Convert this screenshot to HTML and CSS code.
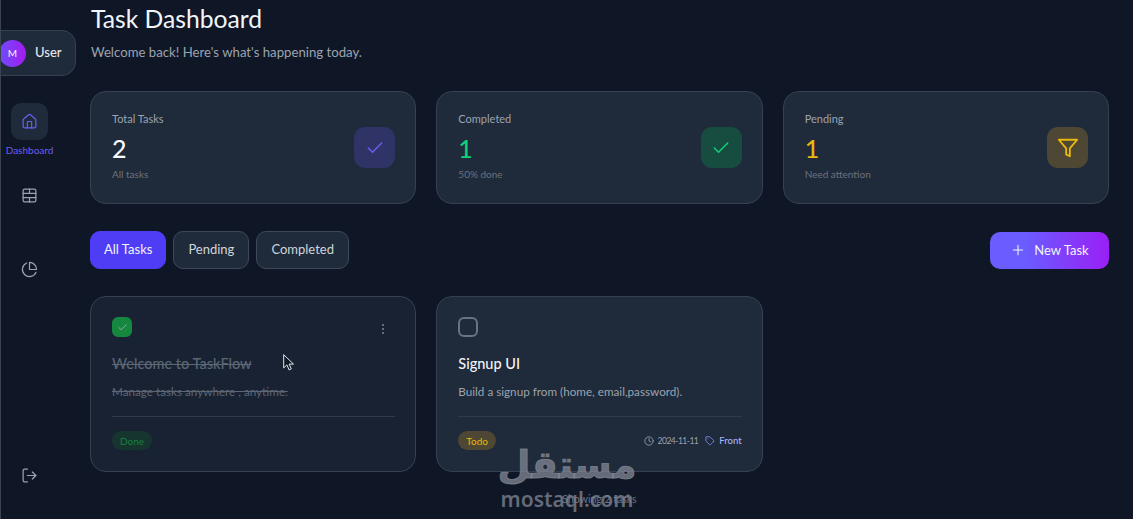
FILE: index.html
```html
<!doctype html>
<html lang="en">

<head>
  <meta charset="utf-8">
  <title>Task Dashboard</title>
  <link rel="stylesheet" href="styles.css">
</head>

<body>
  <aside class="sidebar">
    <div class="user-chip">
      <span class="avatar">M</span>
      <span class="user-name">User</span>
    </div>

    <nav class="nav">
      <a class="nav-item active">
        <span class="nav-tile">
          <svg class="icon" viewBox="0 0 24 24"><path d="M15 21v-8a1 1 0 0 0-1-1h-4a1 1 0 0 0-1 1v8"/><path d="M3 10a2 2 0 0 1 .709-1.528l7-5.999a2 2 0 0 1 2.582 0l7 5.999A2 2 0 0 1 21 10v9a2 2 0 0 1-2 2H5a2 2 0 0 1-2-2z"/></svg>
        </span>
        <span class="nav-label">Dashboard</span>
      </a>
      <a class="nav-item">
        <span class="nav-tile">
          <svg class="icon" viewBox="0 0 24 24"><rect x="3" y="3" width="18" height="18" rx="2"/><path d="M3 9h18M3 15h18M12 3v6M12 15v6"/></svg>
        </span>
      </a>
      <a class="nav-item">
        <span class="nav-tile">
          <svg class="icon" viewBox="0 0 24 24"><path d="M21.21 15.89A10 10 0 1 1 8 2.83"/><path d="M22 12A10 10 0 0 0 12 2v10z"/></svg>
        </span>
      </a>
    </nav>

    <a class="nav-tile logout">
      <svg class="icon" viewBox="0 0 24 24"><path d="M9 21H5a2 2 0 0 1-2-2V5a2 2 0 0 1 2-2h4"/><path d="M16 17l5-5-5-5"/><path d="M21 12H9"/></svg>
    </a>
  </aside>

  <main class="main">
    <h1 class="page-title">Task Dashboard</h1>
    <p class="page-sub">Welcome back! Here's what's happening today.</p>

    <section class="stats">
      <div class="stat-card">
        <div>
          <div class="stat-label">Total Tasks</div>
          <div class="stat-value">2</div>
          <div class="stat-note">All tasks</div>
        </div>
        <span class="stat-icon indigo">
          <svg class="icon" viewBox="0 0 24 24"><path d="M20 6L9 17l-5-5"/></svg>
        </span>
      </div>
      <div class="stat-card">
        <div>
          <div class="stat-label">Completed</div>
          <div class="stat-value green">1</div>
          <div class="stat-note">50% done</div>
        </div>
        <span class="stat-icon emerald">
          <svg class="icon" viewBox="0 0 24 24"><path d="M20 6L9 17l-5-5"/></svg>
        </span>
      </div>
      <div class="stat-card">
        <div>
          <div class="stat-label">Pending</div>
          <div class="stat-value yellow">1</div>
          <div class="stat-note">Need attention</div>
        </div>
        <span class="stat-icon amber">
          <svg class="icon" viewBox="0 0 24 24"><path d="M22 3H2l8 9.46V19l4 2v-8.54z"/></svg>
        </span>
      </div>
    </section>

    <section class="toolbar">
      <div class="filters">
        <button class="filter active">All Tasks</button>
        <button class="filter">Pending</button>
        <button class="filter">Completed</button>
      </div>
      <button class="new-task">
        <svg class="icon" viewBox="0 0 24 24"><path d="M12 5v14M5 12h14"/></svg>
        New Task
      </button>
    </section>

    <section class="tasks">
      <article class="task-card done">
        <div class="task-top">
          <span class="checkbox checked">
            <svg class="icon" viewBox="0 0 24 24"><path d="M20 6L9 17l-5-5"/></svg>
          </span>
          <span class="kebab"><i></i><i></i><i></i></span>
        </div>
        <h2 class="task-title">Welcome to TaskFlow</h2>
        <p class="task-desc">Manage tasks anywhere , anytime.</p>
        <div class="task-foot">
          <span class="badge badge-done">Done</span>
        </div>
      </article>

      <article class="task-card">
        <div class="task-top">
          <span class="checkbox"></span>
        </div>
        <h2 class="task-title">Signup UI</h2>
        <p class="task-desc">Build a signup from (home, email,password).</p>
        <div class="task-foot">
          <span class="badge badge-todo">Todo</span>
          <div class="task-meta">
            <svg class="icon" viewBox="0 0 24 24"><circle cx="12" cy="12" r="10"/><path d="M12 6v6l4 2"/></svg>
            <span class="task-date">2024-11-11</span>
            <svg class="icon tag-icon" viewBox="0 0 24 24"><path d="M20.59 13.41l-7.17 7.17a2 2 0 0 1-2.83 0L2 12V2h10l8.59 8.59a2 2 0 0 1 0 2.82z"/><path d="M7 7h.01"/></svg>
            <span class="tag-name">Front</span>
          </div>
        </div>
      </article>
    </section>

    <p class="task-count">Showing 2 tasks</p>
  </main>

  <!-- mouse pointer caught in the capture -->
  <svg class="cursor" viewBox="0 0 12 17"><path d="M.7.7v13.2l3.2-3 2.2 5 2.2-1-2.2-4.8h4.4z"/></svg>

  <!-- site watermark -->
  <div class="watermark">
    <span class="wm-ar" lang="ar" dir="rtl">مستقل</span>
    <span class="wm-en">mostaql.com</span>
  </div>
</body>

</html>
```

FILE: styles.css
```css
* {
  box-sizing: border-box;
}

html,
body {
  height: 100%;
}

body {
  margin: 0;
  display: flex;
  overflow: hidden;
  position: relative;
  background-color: #0f1727;
  border-left: 1px solid #3b4250;
  color: #f1f5f9;
  font-family: Lato, 'Noto Sans', sans-serif;
}

.icon {
  display: block;
  fill: none;
  stroke: currentColor;
  stroke-width: 2;
  stroke-linecap: round;
  stroke-linejoin: round;
}

/* sidebar */
.sidebar {
  flex: 0 0 75px;
  display: flex;
  flex-direction: column;
  align-items: flex-start;
  overflow: hidden;
  padding: 30px 0 25px;
}

.user-chip {
  display: flex;
  align-items: center;
  gap: 9px;
  width: 89px;
  height: 46px;
  margin-left: -14px;
  padding-left: 11px;
  flex: none;
  background-color: #1f2a3a;
  border: 1px solid #354152;
  border-radius: 14px;
}

.avatar {
  flex: none;
  width: 27px;
  height: 27px;
  border-radius: 50%;
  display: flex;
  align-items: center;
  justify-content: center;
  background: linear-gradient(90deg, #6d4dfa, #a21cf0);
  font-size: 10px;
}

.user-name {
  padding-bottom: 2px;
  font-size: 13px;
  font-weight: 500;
  color: #e5e7eb;
}

.nav {
  width: 57px;
  margin-top: 27px;
  display: flex;
  flex-direction: column;
  gap: 20px;
}

.nav-item {
  height: 54px;
  display: flex;
  flex-direction: column;
  align-items: center;
}

.nav-tile {
  width: 37px;
  height: 37px;
  flex: none;
  display: flex;
  align-items: center;
  justify-content: center;
  border-radius: 10px;
  color: #9ca3af;
}

.nav-tile .icon {
  width: 17px;
  height: 17px;
  stroke-width: 1.7;
}

.nav-item.active .nav-tile {
  background-color: #1f2a3a;
  color: #6d5cf0;
}

.nav-label {
  margin-top: 4px;
  font-size: 10px;
  line-height: 12px;
  color: #6d5cf0;
}

.logout {
  margin-top: auto;
  margin-left: 10px;
}

/* main column */
.main {
  flex: 1;
  min-width: 0;
  padding: 5px 24px 0 14px;
}

.page-title {
  margin: 0 0 0 1px;
  font-size: 24.7px;
  line-height: 28px;
  font-weight: 400;
  color: #f1f5f9;
}

.page-sub {
  margin: 9px 0 0 1px;
  font-size: 13.2px;
  line-height: 20px;
  color: #9ca3af;
}

.stats {
  margin-top: 29px;
  display: grid;
  grid-template-columns: repeat(3, 1fr);
  gap: 20px;
}

.stat-card {
  height: 113px;
  padding: 19px 20px 0 21px;
  display: flex;
  justify-content: space-between;
  background-color: #1f2a3a;
  border: 1px solid #354152;
  border-radius: 16px;
}

.stat-label {
  font-size: 11px;
  line-height: 16px;
  color: #9ca3af;
}

.stat-value {
  margin-top: 5px;
  font-size: 25px;
  line-height: 32px;
  font-weight: 500;
  color: #f8fafc;
}

.stat-value.green {
  color: #10d078;
}

.stat-value.yellow {
  color: #eab90c;
}

.stat-note {
  margin-top: 4px;
  font-size: 10px;
  line-height: 12px;
  color: #6b7280;
}

.stat-icon {
  width: 41px;
  height: 41px;
  margin-top: 16px;
  border-radius: 11px;
  display: flex;
  align-items: center;
  justify-content: center;
}

.stat-icon .icon {
  width: 20px;
  height: 20px;
  stroke-width: 1.8;
}

.stat-icon.indigo {
  background-color: #2f3366;
  color: #6d5cf0;
}

.stat-icon.emerald {
  background-color: #174d40;
  color: #10d078;
}

.stat-icon.amber {
  background-color: #4d4733;
  color: #eab90c;
}

.stat-icon.amber .icon {
  width: 22px;
  height: 22px;
  stroke-width: 2;
}

/* filters row */
.toolbar {
  margin-top: 27px;
  height: 38px;
  display: flex;
  align-items: center;
  justify-content: space-between;
}

.filters {
  display: flex;
  gap: 7px;
}

.filter {
  height: 38px;
  padding: 0 14px 2px;
  font-family: inherit;
  font-size: 13px;
  color: #d1d5db;
  background-color: #1f2a3a;
  border: 1px solid #3d4858;
  border-radius: 10px;
}

.filter.active {
  padding: 0 13px 2px;
  background-color: #4f3df5;
  border-color: #4f3df5;
  color: #f1f5f9;
}

.new-task {
  width: 119px;
  height: 37px;
  padding-bottom: 2px;
  display: flex;
  align-items: center;
  justify-content: center;
  gap: 8px;
  font-family: inherit;
  font-size: 13px;
  color: #f1f5f9;
  background: linear-gradient(90deg, #6a5cff, #6a5cff 30%, #9a1ff5);
  border: 0;
  border-radius: 10px;
}

.new-task .icon {
  width: 16px;
  height: 16px;
  stroke-width: 1.6;
}

/* task cards */
.tasks {
  margin-top: 27px;
  display: grid;
  grid-template-columns: repeat(3, 1fr);
  gap: 20px;
}

.task-card {
  height: 176px;
  padding: 20px 20px 0 21px;
  background-color: #1f2a3a;
  border: 1px solid #354152;
  border-radius: 16px;
}

.task-card.done {
  background-color: #192232;
}

.task-top {
  display: flex;
  justify-content: space-between;
  align-items: center;
  height: 20px;
}

.checkbox {
  width: 20px;
  height: 20px;
  border: 2px solid #6b7280;
  border-radius: 6px;
  display: flex;
  align-items: center;
  justify-content: center;
}

.checkbox.checked {
  background-color: #16873f;
  border-color: #16873f;
  color: #8fb29b;
}

.checkbox .icon {
  width: 11px;
  height: 11px;
}

.kebab {
  display: flex;
  flex-direction: column;
  gap: 2px;
  margin: 4px 11px 0 0;
}

.kebab i {
  width: 2px;
  height: 2px;
  border-radius: 50%;
  background-color: #7c8899;
}

.task-title {
  margin: 17px 0 0;
  font-size: 14.5px;
  line-height: 20px;
  font-weight: 500;
  color: #f1f5f9;
}

.task-desc {
  margin: 9px 0 0;
  font-size: 11.7px;
  line-height: 16px;
  color: #9ca3af;
}

.done .task-title,
.done .task-desc {
  color: #5c6675;
  text-decoration: line-through;
}

.task-foot {
  margin-top: 17px;
  padding-top: 14px;
  border-top: 1px solid #2f3b4d;
  display: flex;
  align-items: center;
  justify-content: space-between;
}

.badge {
  height: 19px;
  padding: 0 8px;
  display: flex;
  align-items: center;
  border-radius: 10px;
  font-size: 10px;
}

.badge-done {
  background-color: #17352f;
  color: #15803d;
}

.badge-todo {
  background-color: #4d4733;
  color: #eab90c;
}

.task-meta {
  display: flex;
  align-items: center;
  font-size: 9.5px;
  color: #9ca3af;
}

.task-meta .icon {
  width: 10px;
  height: 10px;
  margin-right: 4px;
}

.task-date {
  font-size: 8.5px;
  letter-spacing: -0.5px;
}

.task-meta .tag-icon {
  margin-left: 7px;
  color: #818cf8;
}

.tag-name {
  font-weight: 500;
  color: #a5b4fc;
}

.task-count {
  margin: 18px 0 0;
  text-align: center;
  font-size: 10.5px;
  line-height: 18px;
  color: #6b7280;
}

/* things lying over the page */
.cursor {
  position: absolute;
  left: 282px;
  top: 354px;
  width: 12px;
  height: 17px;
  fill: #111827;
  stroke: #e2e8f0;
  stroke-width: 1;
}

.watermark {
  position: absolute;
  left: 498px;
  top: 441px;
  width: 136px;
  display: flex;
  flex-direction: column;
  align-items: center;
  color: rgba(130, 135, 148, 0.75);
  pointer-events: none;
}

.wm-ar {
  font-family: 'DejaVu Sans', sans-serif;
  font-weight: 700;
  font-size: 38px;
  line-height: 48px;
  -webkit-text-stroke: 1px currentColor;
}

.wm-en {
  font-family: 'Noto Sans', sans-serif;
  font-weight: 600;
  font-size: 21px;
  line-height: 20px;
}
```
